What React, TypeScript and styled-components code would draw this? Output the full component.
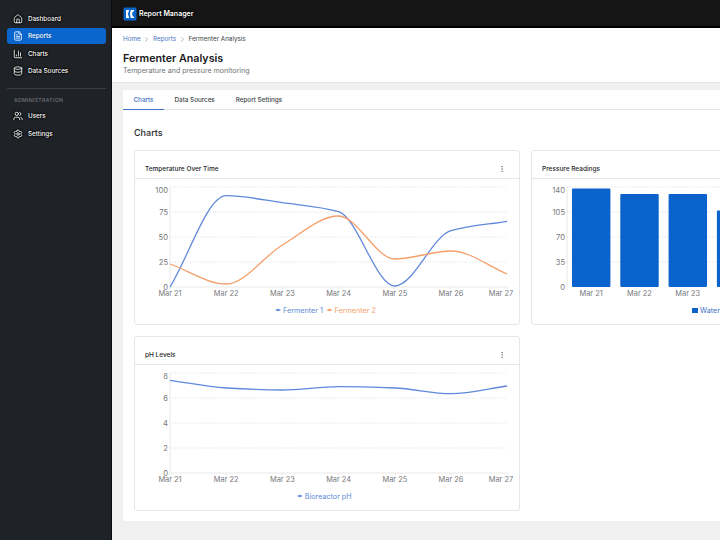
import { FileText, House, ChartColumn, Database, Users, Settings, EllipsisVertical, ChevronRight } from 'lucide-react';
import styled, { createGlobalStyle } from 'styled-components';

const GlobalStyle = createGlobalStyle`
    html, body {
        margin: 0;
        height: 100%;
        overflow: hidden;
        font-family: Inter, "Liberation Sans", sans-serif;
    }
`;

const Shell = styled.div`
    display: flex;
    width: 720px;
    height: 540px;
    overflow: hidden;
    background: #f0f0f0;
`;

const Sidebar = styled.nav`
    flex: 0 0 112px;
    box-sizing: border-box;
    background: #1f2226;
    border-right: 1px solid #0b0b0b;
    padding: 10.5px 5px 0 7px;
`;

const NavItem = styled.div<{ $active?: boolean }>`
    display: flex;
    align-items: center;
    gap: 5px;
    height: 16px;
    margin-bottom: 1.6px;
    padding-left: 6px;
    border-radius: 3px;
    background: ${({ $active }) => ($active ? '#0a66cc' : 'transparent')};
    color: #ffffff;
    font-size: 6.3px;
    font-weight: 500;
    text-shadow: ${({ $active }) => ($active ? '0 0 1px #0a4a99' : '0 0 1.5px #000000, 0 0 1.5px #000000, 0 0 2px #000000')};

    svg {
        width: 10px;
        height: 10px;
        filter: ${({ $active }) => ($active ? 'none' : 'drop-shadow(0 0 1px #000000) drop-shadow(0 0 1px #000000)')};
    }
`;

const NavDivider = styled.div`
    height: 1px;
    background: #3a3d41;
    margin: 9px 0 8px;
`;

const NavGroupLabel = styled.div`
    color: #70747a;
    font-size: 5.2px;
    font-weight: 500;
    letter-spacing: 0.3px;
    line-height: 7px;
    margin-bottom: 4px;
    padding-left: 7px;
`;

const MainColumn = styled.div`
    flex: 1;
    min-width: 0;
    display: flex;
    flex-direction: column;
`;

const TopBar = styled.header`
    flex: 0 0 25px;
    box-sizing: content-box;
    display: flex;
    align-items: center;
    gap: 2px;
    padding: 1px 0 0 11px;
    background: #151515;
    border-bottom: 2px solid #000000;
    color: #ffffff;
    font-size: 7px;
    font-weight: 600;
    text-shadow: 0 0 1.5px #000000, 0 0 2px #000000;
`;

const PageHead = styled.div`
    flex: 0 0 55px;
    box-sizing: border-box;
    background: #ffffff;
    border-bottom: 1px solid #e4e4e4;
    padding: 7px 11px 0;
`;

const Breadcrumbs = styled.div`
    display: flex;
    align-items: center;
    gap: 2.7px;
    height: 8px;
    font-size: 6.3px;
    color: #3c3f44;

    a {
        color: #3f72c4;
    }

    svg {
        width: 7px;
        height: 7px;
        color: #777777;
    }
`;

const PageTitle = styled.h1`
    margin: 9px 0 0;
    font-size: 10.7px;
    line-height: 14px;
    font-weight: 600;
    color: #17181a;
`;

const PageSubtitle = styled.p`
    margin: 0;
    font-size: 7.1px;
    line-height: 10px;
    color: #6f7276;
`;

const Content = styled.main`
    flex: 1;
    padding: 7px 0 19px 11px;
    min-height: 0;
`;

const Panel = styled.section`
    height: 100%;
    box-sizing: border-box;
    background: #ffffff;
`;

const TabRow = styled.div`
    display: flex;
    height: 20px;
    box-sizing: border-box;
    border-bottom: 1px solid #e4e4e4;
`;

const Tab = styled.div<{ $active?: boolean }>`
    display: flex;
    align-items: center;
    padding: 0 10.5px;
    height: 20px;
    box-sizing: border-box;
    font-size: 6.3px;
    font-weight: 500;
    color: ${({ $active }) => ($active ? '#3f72c4' : '#3c3f44')};
    border-bottom: 1px solid ${({ $active }) => ($active ? '#3f72c4' : 'transparent')};
`;

const PanelBody = styled.div`
    padding: 16px 0 0 11px;
`;

const SectionTitle = styled.h2`
    margin: 0 0 11px;
    font-size: 9px;
    line-height: 13px;
    font-weight: 500;
    color: #26282b;
`;

const ChartGrid = styled.div`
    display: grid;
    grid-template-columns: 386px 386px;
    gap: 11px;
`;

const Card = styled.article`
    height: 175px;
    box-sizing: border-box;
    border: 1px solid #e6e6e6;
    border-radius: 3px;
    background: #ffffff;
    overflow: hidden;
`;

const CardHead = styled.div`
    display: flex;
    align-items: center;
    justify-content: space-between;
    height: 28px;
    box-sizing: border-box;
    padding: 8px 13px 0 10px;
    border-bottom: 1px solid #e6e6e6;
    font-size: 6.5px;
    font-weight: 500;
    color: #26282b;

    svg {
        width: 8px;
        height: 8px;
        color: #777777;
    }
`;

const Plot = styled.svg`
    display: block;
    width: 384px;
    height: 145px;
    font-family: Inter, "Liberation Sans", sans-serif;
`;

type Point = [number, number];

// monotone cubic through the data points, same curve type the chart library uses
const monotonePath = (pts: Point[]) => {
    const n = pts.length;
    const dx = pts.slice(1).map((p, i) => p[0] - pts[i][0]);
    const slope = pts.slice(1).map((p, i) => (p[1] - pts[i][1]) / dx[i]);
    const tan = pts.map((_, i) => {
        if (i === 0) return slope[0];
        if (i === n - 1) return slope[n - 2];
        if (slope[i - 1] * slope[i] <= 0) return 0;
        return (2 * slope[i - 1] * slope[i]) / (slope[i - 1] + slope[i]);
    });
    let d = `M${pts[0][0]} ${pts[0][1]}`;
    for (let i = 0; i < n - 1; i++) {
        const h = dx[i] / 3;
        d += ` C${pts[i][0] + h} ${pts[i][1] + tan[i] * h} ${pts[i + 1][0] - h} ${pts[i + 1][1] - tan[i + 1] * h} ${pts[i + 1][0]} ${pts[i + 1][1]}`;
    }
    return d;
};

const days = ['Mar 21', 'Mar 22', 'Mar 23', 'Mar 24', 'Mar 25', 'Mar 26', 'Mar 27'];
const LEFT = 35;
const STEP = 56.2;
const TOP = 8;
const BOTTOM = 108;
const xAt = (i: number) => LEFT + i * STEP;
const RIGHT = xAt(6);

const BLUE = '#6089db';
const ORANGE = '#f59f6b';
const AXIS = '#e8e8e8';
const DOTS = '#d6d6d6';
const LABEL = '#77797d';

const Grid = ({ ticks }: { ticks: string[] }) => (
    <>
        {ticks.map((t, i) => {
            const y = BOTTOM - (i * (BOTTOM - TOP)) / (ticks.length - 1);
            // the top label gets pushed inside the plot
            const labelY = i === ticks.length - 1 ? y + 5.8 : y + 2.8;
            return (
                <g key={t}>
                    {i > 0 && <line x1={LEFT} x2={RIGHT} y1={y} y2={y} stroke={DOTS} strokeWidth='0.8' strokeDasharray='1 1.5' />}
                    <text x={LEFT - 2} y={labelY} textAnchor='end' fontSize='7.6' fill={LABEL}>
                        {t}
                    </text>
                </g>
            );
        })}
    </>
);

const LegendRow = ({ items }: { items: { color: string; label: string }[] }) => {
    const widths = items.map((it) => it.label.length * 3.95 + 8);
    const total = widths.reduce((a, b) => a + b, 0);
    let x = 192 - total / 2;
    return (
        <>
            {items.map((it, i) => {
                const x0 = x;
                x += widths[i];
                return (
                    <g key={it.label}>
                        <line x1={x0} x2={x0 + 5} y1={131} y2={131} stroke={it.color} strokeWidth='1.1' />
                        <circle cx={x0 + 2.5} cy={131} r='1.3' fill={it.color} />
                        <text x={x0 + 7.5} y={133.6} fontSize='7.2' fill={it.color}>
                            {it.label}
                        </text>
                    </g>
                );
            })}
        </>
    );
};

const LineChart = ({ ticks, series, legend }: { ticks: string[]; series: { color: string; ys: number[] }[]; legend: { color: string; label: string }[] }) => (
    <Plot viewBox='0 0 384 145'>
        <Grid ticks={ticks} />
        <line x1={LEFT} x2={LEFT} y1={TOP} y2={BOTTOM} stroke={AXIS} />
        <line x1={LEFT} x2={RIGHT} y1={BOTTOM} y2={BOTTOM} stroke={AXIS} />
        {days.map((d, i) => (
            <g key={d}>
                <line x1={xAt(i)} x2={xAt(i)} y1={BOTTOM} y2={BOTTOM + 2} stroke={AXIS} />
                <text x={i === 6 ? RIGHT + 6 : xAt(i)} y={BOTTOM + 9} textAnchor={i === 6 ? 'end' : 'middle'} fontSize='7.4' fill={LABEL}>
                    {d}
                </text>
            </g>
        ))}
        {series.map((s) => (
            <path key={s.color} d={monotonePath(s.ys.map((y, i) => [xAt(i), y] as Point))} fill='none' stroke={s.color} strokeWidth='1.3' />
        ))}
        <LegendRow items={legend} />
    </Plot>
);

const bars = [188.5, 194, 194, 210.5, 200, 205, 198];

const BarChart = () => {
    const left = 35;
    const band = 48.3;
    return (
        <Plot viewBox='0 0 384 145'>
            <Grid ticks={['0', '35', '70', '105', '140']} />
            <line x1={left} x2={left} y1={TOP} y2={BOTTOM} stroke={AXIS} />
            {bars.map((top, i) => (
                <g key={i}>
                    <rect x={left + 5 + i * band} y={top - 179} width='38.4' height={287 - top} rx='1' fill='#0a62cc' />
                    <text x={left + band / 2 + i * band} y={BOTTOM + 9} textAnchor='middle' fontSize='7.4' fill={LABEL}>
                        {days[i]}
                    </text>
                </g>
            ))}
            <rect x='160' y='129' width='6' height='5' fill='#0a62cc' />
            <text x='168' y='133.6' fontSize='7.2' fill='#3f72c4'>
                Water Pressure
            </text>
        </Plot>
    );
};

const LogoMark = () => (
    <svg width='14' height='14' viewBox='0 0 14 14'>
        <rect x='0.5' y='0.5' width='13' height='13' rx='1.5' fill='#0a66cc' />
        <path d='M3 3h3.2L4.9 7l1.3 4H3zM7.8 3H11v1.5H9.9L9 7l.9 2.5H11V11H7.8L6.9 7z' fill='#ffffff' />
    </svg>
);

export default function App() {
    return (
        <Shell>
            <GlobalStyle />
            <Sidebar>
                <NavItem><House />Dashboard</NavItem>
                <NavItem $active><FileText />Reports</NavItem>
                <NavItem><ChartColumn />Charts</NavItem>
                <NavItem><Database />Data Sources</NavItem>
                <NavDivider />
                <NavGroupLabel>ADMINISTRATION</NavGroupLabel>
                <NavItem><Users />Users</NavItem>
                <NavItem><Settings />Settings</NavItem>
            </Sidebar>
            <MainColumn>
                <TopBar>
                    <LogoMark />
                    Report Manager
                </TopBar>
                <PageHead>
                    <Breadcrumbs>
                        <a>Home</a>
                        <ChevronRight />
                        <a>Reports</a>
                        <ChevronRight />
                        <span>Fermenter Analysis</span>
                    </Breadcrumbs>
                    <PageTitle>Fermenter Analysis</PageTitle>
                    <PageSubtitle>Temperature and pressure monitoring</PageSubtitle>
                </PageHead>
                <Content>
                    <Panel>
                        <TabRow>
                            <Tab $active>Charts</Tab>
                            <Tab>Data Sources</Tab>
                            <Tab>Report Settings</Tab>
                        </TabRow>
                        <PanelBody>
                            <SectionTitle>Charts</SectionTitle>
                            <ChartGrid>
                                <Card>
                                    <CardHead>Temperature Over Time<EllipsisVertical /></CardHead>
                                    <LineChart
                                        ticks={['0', '25', '50', '75', '100']}
                                        series={[
                                            { color: BLUE, ys: [108, 16.7, 23.7, 32.7, 107, 51.7, 42.3] },
                                            { color: ORANGE, ys: [85, 105, 66, 37, 80, 72, 95] },
                                        ]}
                                        legend={[
                                            { color: BLUE, label: 'Fermenter 1' },
                                            { color: ORANGE, label: 'Fermenter 2' },
                                        ]}
                                    />
                                </Card>
                                <Card>
                                    <CardHead>Pressure Readings<EllipsisVertical /></CardHead>
                                    <BarChart />
                                </Card>
                                <Card>
                                    <CardHead>pH Levels<EllipsisVertical /></CardHead>
                                    <LineChart
                                        ticks={['0', '2', '4', '6', '8']}
                                        series={[{ color: BLUE, ys: [15.3, 23, 25, 21.7, 23, 28.7, 21] }]}
                                        legend={[{ color: BLUE, label: 'Bioreactor pH' }]}
                                    />
                                </Card>
                            </ChartGrid>
                        </PanelBody>
                    </Panel>
                </Content>
            </MainColumn>
        </Shell>
    );
}
